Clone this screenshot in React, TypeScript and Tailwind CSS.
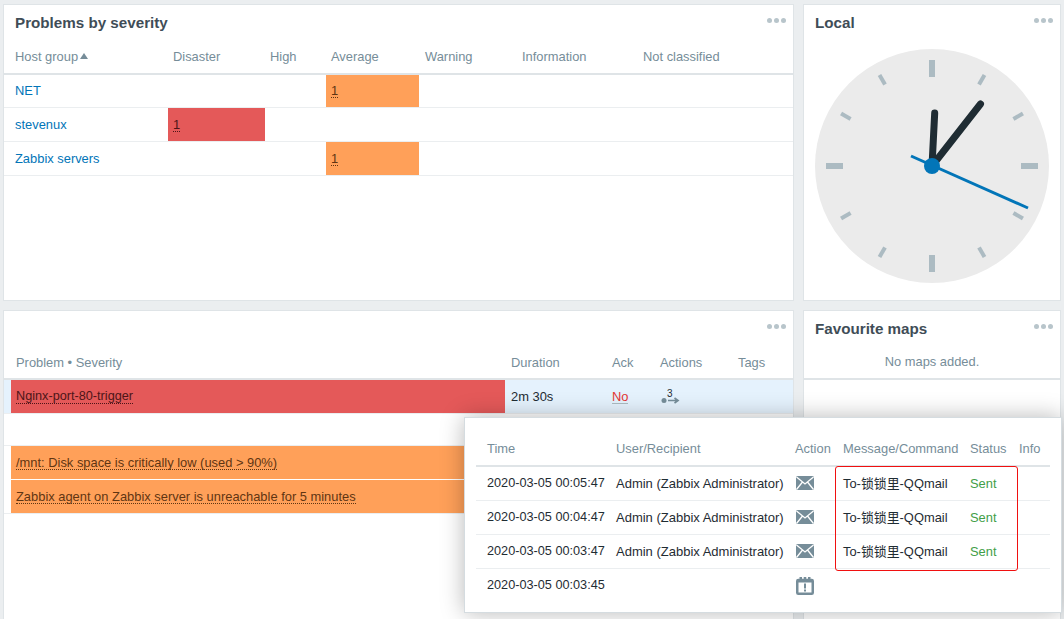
import React from "react";

const Dots = () => (
  <div className="absolute right-[7px] top-[13px] flex gap-[2px]">
    <span className="w-[5px] h-[5px] rounded-full bg-[#b8c5cb]" />
    <span className="w-[5px] h-[5px] rounded-full bg-[#b8c5cb]" />
    <span className="w-[5px] h-[5px] rounded-full bg-[#b8c5cb]" />
  </div>
);

const Title = ({ children }: { children?: React.ReactNode }) => (
  <div className="h-[35px] pl-[11px] flex items-center pt-[1px] text-[15.2px] font-bold text-[#3f4d57]">{children}</div>
);

const Dotted = ({ children, className = "" }: { children: React.ReactNode; className?: string }) => (
  <span className={"border-b border-dotted leading-[13px] " + className}>{children}</span>
);

const sevCols = "grid grid-cols-[164px_97px_61px_93px_98px_121px_1fr]";

const SevRow = ({ name, dis, avg, h }: { name: string; dis?: boolean; avg?: boolean; h: string }) => (
  <div className={sevCols + " border-b border-[#ebeef0] " + h}>
    <div className="pl-[11px] flex items-center text-[#0275b8]">{name}</div>
    <div className={"pl-[5px] flex items-center " + (dis ? "bg-[#e45959] text-[#4d1518]" : "")}>
      {dis && <Dotted className="border-[#4d1518]">1</Dotted>}
    </div>
    <div />
    <div className={"pl-[5px] flex items-center " + (avg ? "bg-[#ffa059] text-[#5f3512]" : "")}>
      {avg && <Dotted className="border-[#5f3512]">1</Dotted>}
    </div>
  </div>
);

const Clock = () => {
  const marks = Array.from({ length: 12 }, (_, i) => i * 30);
  return (
    <svg viewBox="-117 -117 234 234" className="w-[234px] h-[234px] mx-auto block">
      <circle r="117" fill="#ebebeb" />
      {marks.map((a) =>
        a % 90 === 0 ? (
          <rect key={a} x="-3" y="-106" width="6" height="17" fill="#acbbc2" transform={`rotate(${a})`} />
        ) : (
          <rect key={a} x="-2" y="-105" width="4" height="11" fill="#acbbc2" transform={`rotate(${a})`} />
        )
      )}
      <line x1="0" y1="0" x2="2.7" y2="-53" stroke="#1f2c33" strokeWidth="7" strokeLinecap="round" />
      <line x1="0" y1="0" x2="48.5" y2="-62" stroke="#1f2c33" strokeWidth="7" strokeLinecap="round" />
      <line x1="-21" y1="-10" x2="96" y2="42" stroke="#0275b8" strokeWidth="3" />
      <circle r="8" fill="#0275b8" />
    </svg>
  );
};

const probCols = "grid grid-cols-[7px_494px_107px_48px_78px_1fr]";

const Mail = () => (
  <svg width="18" height="14" viewBox="0 0 18 14" className="block -translate-y-px">
    <rect x="0" y="0" width="18" height="14" rx="1.5" fill="#768d99" />
    <path d="M0.5 1 L9 8 L17.5 1 M0.5 13.5 L6.5 6 M17.5 13.5 L11.5 6" stroke="#fff" strokeWidth="1.3" fill="none" />
  </svg>
);

const Cal = () => (
  <svg width="18" height="18" viewBox="0 0 18 18" className="block">
    <rect x="1.25" y="3" width="15.5" height="13.75" rx="1" fill="#fff" stroke="#768d99" strokeWidth="2.5" />
    <rect x="1" y="2" width="16" height="3.5" fill="#768d99" />
    <rect x="3.5" y="0" width="2.5" height="3" fill="#768d99" />
    <rect x="7.75" y="0" width="2.5" height="3" fill="#768d99" />
    <rect x="12" y="0" width="2.5" height="3" fill="#768d99" />
    <rect x="8" y="6.5" width="2" height="5" fill="#768d99" />
    <rect x="8" y="12.5" width="2" height="2" fill="#768d99" />
  </svg>
);

const logCols = "grid grid-cols-[129px_179px_48px_127px_49px_1fr] pl-[11px]";

const LogRow = ({ time, icon, full }: { time: string; icon: React.ReactNode; full: boolean }) => (
  <div className={logCols + " h-[34px] items-center text-[#1f2c33] " + (full ? "border-b border-[#ebeef0]" : "")}>
    <div className="text-[12.7px]">{time}</div>
    <div className="text-[13px]">{full ? "Admin (Zabbix Administrator)" : ""}</div>
    <div className="pl-px">{icon}</div>
    <div>{full ? "To-锁锁里-QQmail" : ""}</div>
    <div className="text-[#429e47]">{full ? "Sent" : ""}</div>
    <div />
  </div>
);

export default function App() {
  return (
    <div
      className="relative w-[1064px] h-[619px] overflow-hidden bg-[#ebeef0] pl-[3px] pt-[4px] text-[12.9px] text-[#1f2c33]"
      style={{ fontFamily: '"Liberation Sans", "Noto Sans CJK SC", sans-serif' }}
    >
      <div className="grid grid-cols-[791px_258px] gap-x-[9px] grid-rows-[297px_1fr] gap-y-[9px] h-[700px]">
        <section className="relative bg-white border border-[#dfe4e7]">
          <Title>Problems by severity</Title>
          <Dots />
          <div className={sevCols + " h-[35px] border-b-2 border-[#dfe4e7] items-center text-[#768d99]"}>
            <div className="pl-[11px] flex items-center gap-[2px]">
              Host group
              <span className="w-0 h-0 border-x-[4px] border-x-transparent border-b-[6px] border-b-[#768d99]" />
            </div>
            <div className="pl-[5px]">Disaster</div>
            <div className="pl-[5px]">High</div>
            <div className="pl-[5px]">Average</div>
            <div className="pl-[6px]">Warning</div>
            <div className="pl-[5px]">Information</div>
            <div className="pl-[5px]">Not classified</div>
          </div>
          <SevRow name="NET" avg h="h-[33px]" />
          <SevRow name="stevenux" dis h="h-[34px]" />
          <SevRow name="Zabbix servers" avg h="h-[34px]" />
        </section>

        <section className="relative bg-white border border-[#dfe4e7]">
          <Title>Local</Title>
          <Dots />
          <div className="pt-[9px]">
            <Clock />
          </div>
        </section>

        <section className="relative bg-white border border-[#dfe4e7]">
          <Dots />
          <div className="h-[35px]" />
          <div className={probCols + " h-[34px] pt-px border-b-2 border-[#dfe4e7] items-center text-[#768d99]"}>
            <div />
            <div className="pl-[5px]">Problem • Severity</div>
            <div className="pl-[6px]">Duration</div>
            <div>Ack</div>
            <div>Actions</div>
            <div>Tags</div>
          </div>
          <div className={probCols + " h-[34px] border-b border-[#ebeef0] bg-[#e5f2fd]"}>
            <div />
            <div className="pl-[5px] flex items-center bg-[#e45959] text-[#4d1518]">
              <Dotted className="border-[#4d1518] text-[12.7px]">Nginx-port-80-trigger</Dotted>
            </div>
            <div className="pl-[6px] flex items-center">2m 30s</div>
            <div className="flex items-center">
              <span className="text-[#e33734] border-b border-[#acbbc2] leading-[13px]">No</span>
            </div>
            <div className="flex items-center">
              <svg width="22" height="20" viewBox="0 0 22 20" className="overflow-visible">
                <circle cx="4" cy="13.5" r="2.5" fill="#768d99" />
                <path d="M8 13.5 H17 M14.5 11 L18 13.5 L14.5 16" stroke="#768d99" strokeWidth="1.7" fill="none" />
                <text x="7" y="10" fontSize="10" fill="#1f2c33">3</text>
              </svg>
            </div>
            <div />
          </div>
          <div className="h-[32px] border-b border-[#ebeef0]" />
          <div className={probCols + " h-[34px] border-b border-white"}>
            <div />
            <div className="col-span-5 pl-[5px] flex items-center bg-[#ffa059] text-[#5f3512]">
              <Dotted className="border-[#5f3512]">/mnt: Disk space is critically low (used &gt; 90%)</Dotted>
            </div>
          </div>
          <div className={probCols + " h-[34px] border-b border-[#ebeef0]"}>
            <div />
            <div className="col-span-5 pl-[5px] flex items-center bg-[#ffa059] text-[#5f3512]">
              <Dotted className="border-[#5f3512]">Zabbix agent on Zabbix server is unreachable for 5 minutes</Dotted>
            </div>
          </div>
        </section>

        <section className="relative bg-white border border-[#dfe4e7]">
          <Title>Favourite maps</Title>
          <Dots />
          <div className="h-[34px] border-b-2 border-[#dfe4e7] flex items-center justify-center text-[#768d99]">
            No maps added.
          </div>
        </section>
      </div>

      <div className="absolute left-[464px] top-[417px] w-[598px] h-[196px] bg-white border border-[#d5dce0] shadow-[0_0_22px_rgba(0,0,0,0.28)] pt-[14px] px-[11px]">
        <div className={logCols + " h-[35px] pt-[1px] items-center border-b-2 border-[#dfe4e7] text-[#768d99]"}>
          <div>Time</div>
          <div>User/Recipient</div>
          <div>Action</div>
          <div>Message/Command</div>
          <div>Status</div>
          <div>Info</div>
        </div>
        <LogRow time="2020-03-05 00:05:47" icon={<Mail />} full />
        <LogRow time="2020-03-05 00:04:47" icon={<Mail />} full />
        <LogRow time="2020-03-05 00:03:47" icon={<Mail />} full />
        <LogRow time="2020-03-05 00:03:45" icon={<Cal />} full={false} />
      </div>
      <div className="absolute left-[835px] top-[466px] w-[183px] h-[105px] border border-[#f01010] rounded-[3px]" />
    </div>
  );
}
